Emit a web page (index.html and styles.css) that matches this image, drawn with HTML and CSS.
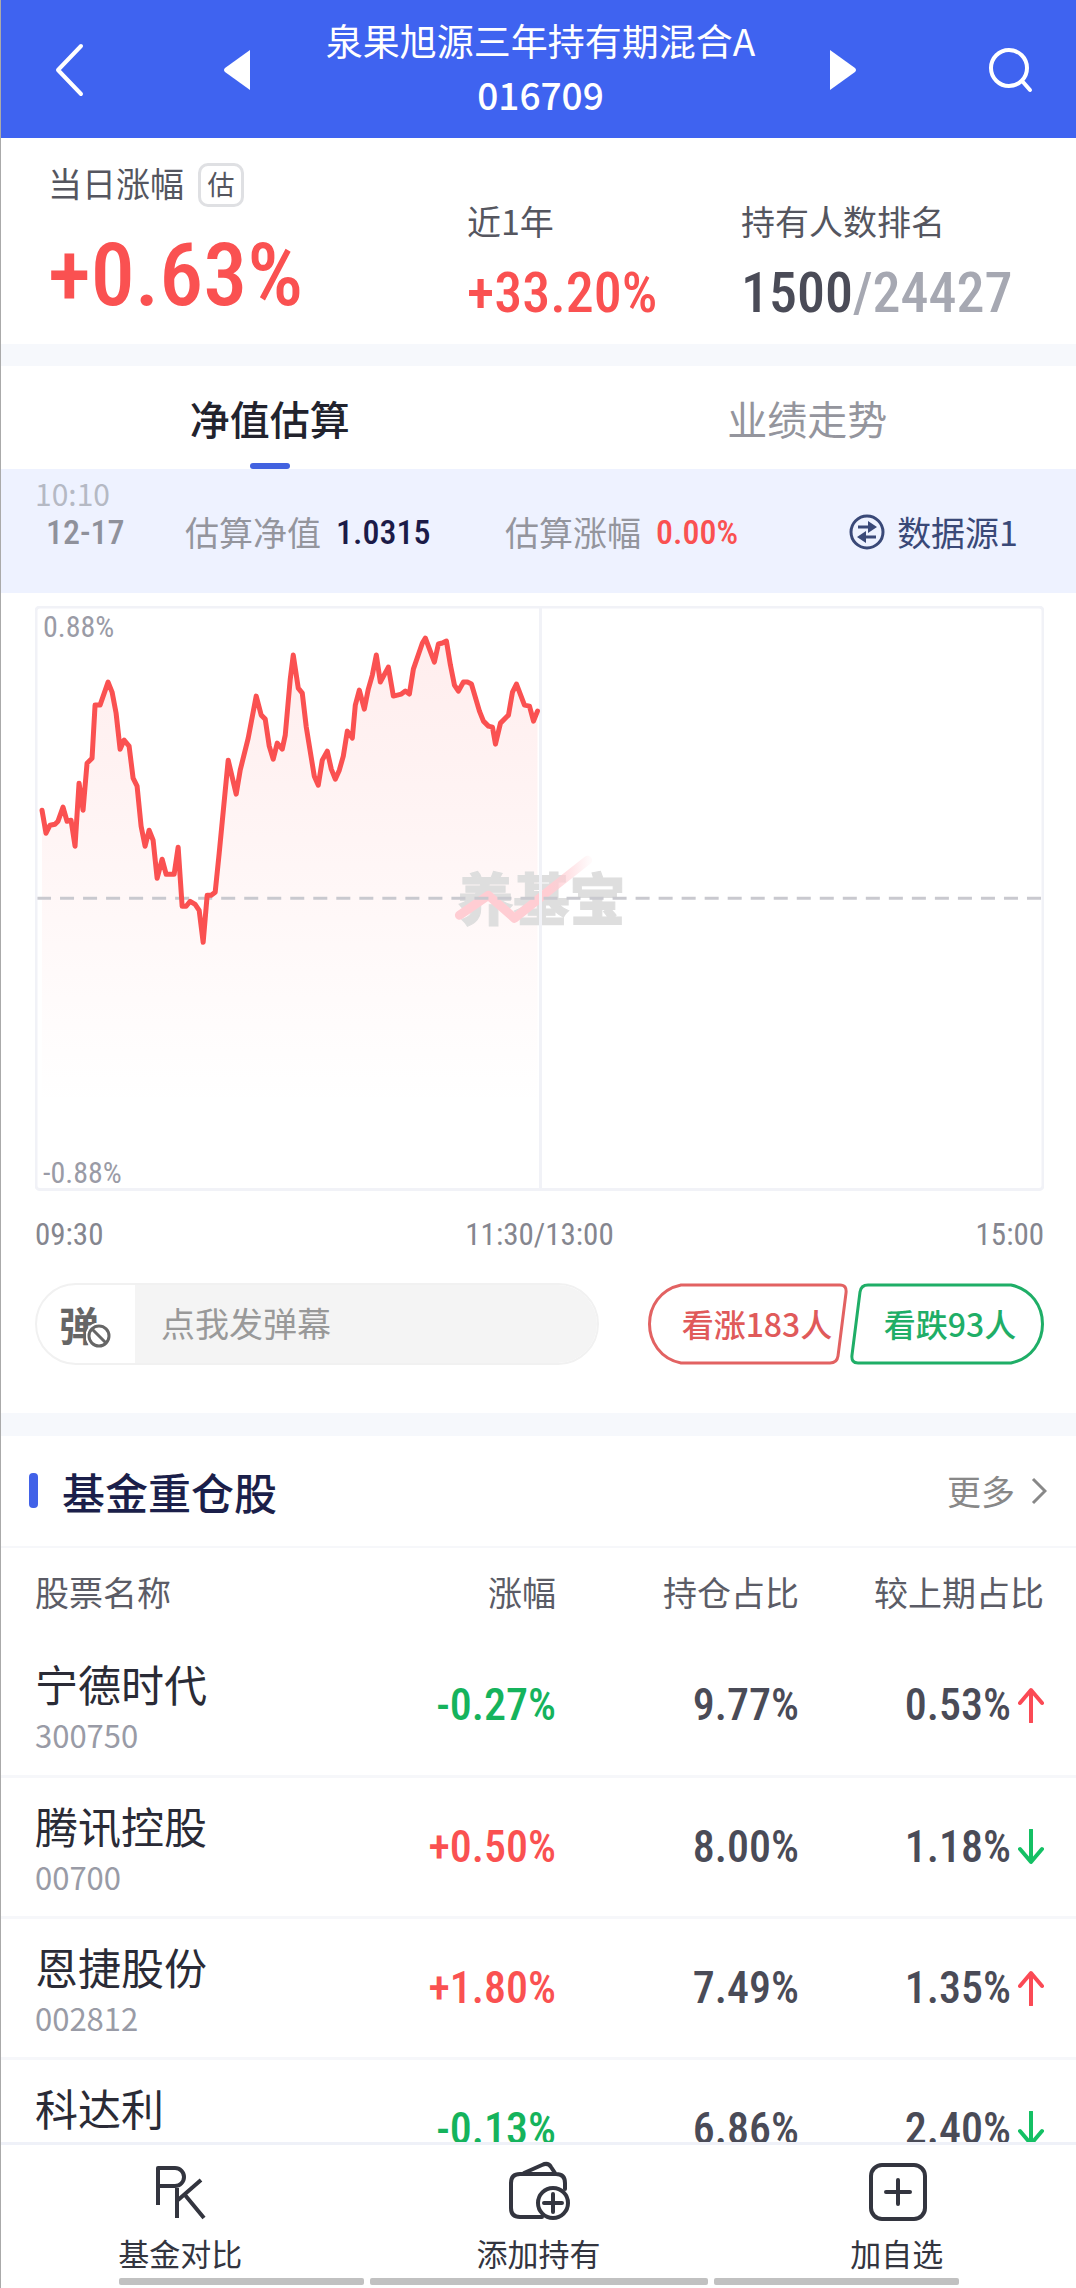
FILE: index.html
```html
<!DOCTYPE html>
<html lang="zh-CN">
<head>
<meta charset="utf-8">
<meta name="viewport" content="width=device-width, initial-scale=1">
<title>泉果旭源三年持有期混合A</title>
<link rel="stylesheet" href="styles.css">
</head>
<body>
<div class="app">
  <header class="topbar">
    <button class="icon-btn" aria-label="返回"><svg width="32" height="56" viewBox="0 0 32 56" fill="none" stroke="#fff" stroke-width="4" stroke-linecap="round" stroke-linejoin="round"><path d="M28 4 5 28l23 24"/></svg></button>
    <button class="icon-btn prev" aria-label="上一只"><svg width="26" height="40" viewBox="0 0 26 40" fill="#fff"><path d="M26 0v40L1 22q-2-2 0-4z"/></svg></button>
    <h1 class="fund-title">泉果旭源三年持有期混合A<span class="fund-code">016709</span></h1>
    <button class="icon-btn next" aria-label="下一只"><svg width="26" height="40" viewBox="0 0 26 40" fill="#fff"><path d="M0 0v40l25-18q2-2 0-4z"/></svg></button>
    <button class="icon-btn" aria-label="搜索"><svg width="46" height="46" viewBox="0 0 46 46" fill="none" stroke="#fff" stroke-width="4" stroke-linecap="round"><circle cx="22" cy="21" r="18"/><path d="m36 35 7 8"/></svg></button>
  </header>

  <main class="content">
    <section class="summary">
      <div class="stat stat-main">
        <div class="label">当日涨幅 <span class="badge">估</span></div>
        <div class="num num-xl up">+0.63%</div>
      </div>
      <div class="stat">
        <div class="label">近1年</div>
        <div class="num num-lg up">+33.20%</div>
      </div>
      <div class="stat">
        <div class="label">持有人数排名</div>
        <div class="num num-lg"><span class="rank">1500</span><span class="total">/24427</span></div>
      </div>
    </section>

    <nav class="tabs">
      <button class="tab active">净值估算</button>
      <button class="tab">业绩走势</button>
    </nav>

    <section class="info">
      <div class="clock">10:10</div>
      <div class="info-row">
        <span class="num date">12-17</span>
        <span class="pair">估算净值 <b class="num">1.0315</b></span>
        <span class="pair">估算涨幅 <b class="num up">0.00%</b></span>
        <button class="source"><svg width="36" height="36" viewBox="0 0 36 36" fill="none" stroke="#3a4978" stroke-width="3"><circle cx="18" cy="18" r="16"/><path d="M9 13h12M27 23H15"/><path d="m19 7 9 6-9 6zM17 29l-9-6 9-6z" fill="#3a4978" stroke="none"/></svg>数据源1</button>
      </div>
    </section>

    <section class="chart-box">
      <div class="chart">
        <svg viewBox="0 0 1008 584" role="img" aria-label="净值估算走势">
          <defs>
            <linearGradient id="area" x1="0" y1="0" x2="0" y2="1"><stop offset="0" stop-color="#ff5050" stop-opacity=".1"/><stop offset=".85" stop-color="#ff5050" stop-opacity="0"/></linearGradient>
            <linearGradient id="tick" gradientUnits="userSpaceOnUse" x1="422" y1="0" x2="554" y2="0"><stop offset=".7" stop-color="#ffcdd3"/><stop offset="1" stop-color="#ffcdd3" stop-opacity=".1"/></linearGradient>
          </defs>
          <path fill="url(#area)" d="M7 204 11 227 15 219 20 218 23 215 28 201 32 215 36 214 40 240 44 177 48 204 52 157 57 152 60 99 65 99 73 76 77 86 81 107 85 143 89 134 94 140 98 172 102 180 106 220 110 240 114 224 118 234 122 272 127 253 131 268 139 268 143 241 147 300 151 300 155 295 160 298 164 304 168 336 172 289 176 289 180 286 184 247 193 154 201 188 205 164 213 132 221 90 226 109 230 113 234 140 238 153 242 137 247 143 250 129 255 73 258 49 263 82 267 87 271 121 279 170 283 179 287 154 292 145 296 163 300 173 304 164 308 150 312 125 317 132 320 99 324 84 329 103 333 83 337 69 341 49 345 76 353 61 358 90 366 88 370 85 374 88 378 63 387 37 390 32 399 56 403 38 407 37 411 35 415 59 419 79 423 85 428 76 432 76 436 78 444 105 448 115 453 120 457 121 460 138 465 117 473 109 477 86 481 78 489 99 494 100 498 115 502 105V582H7z"/>
          <text class="watermark" x="506" y="314" text-anchor="middle">养基宝</text>
          <path d="M424 309 453 289 479 312 514 284 552 254" fill="none" stroke="url(#tick)" stroke-width="9" stroke-linecap="round" stroke-linejoin="round"/>
          <path d="M505 1V583" stroke="#f1f2f7" stroke-width="3"/>
          <path d="M2 292H1006" stroke="#c9c9cf" stroke-width="3" stroke-dasharray="14 9"/>
          <rect x="1" y="1" width="1006" height="582" rx="4" fill="none" stroke="#f1f2f7" stroke-width="3"/>
          <path fill="none" stroke="#fa5151" stroke-width="5" stroke-linejoin="round" stroke-linecap="round" d="M7 204 11 227 15 219 20 218 23 215 28 201 32 215 36 214 40 240 44 177 48 204 52 157 57 152 60 99 65 99 73 76 77 86 81 107 85 143 89 134 94 140 98 172 102 180 106 220 110 240 114 224 118 234 122 272 127 253 131 268 139 268 143 241 147 300 151 300 155 295 160 298 164 304 168 336 172 289 176 289 180 286 184 247 193 154 201 188 205 164 213 132 221 90 226 109 230 113 234 140 238 153 242 137 247 143 250 129 255 73 258 49 263 82 267 87 271 121 279 170 283 179 287 154 292 145 296 163 300 173 304 164 308 150 312 125 317 132 320 99 324 84 329 103 333 83 337 69 341 49 345 76 353 61 358 90 366 88 370 85 374 88 378 63 387 37 390 32 399 56 403 38 407 37 411 35 415 59 419 79 423 85 428 76 432 76 436 78 444 105 448 115 453 120 457 121 460 138 465 117 473 109 477 86 481 78 489 99 494 100 498 115 502 105"/>
        </svg>
        <span class="num bound bound-top">0.88%</span>
        <span class="num bound bound-bottom">-0.88%</span>
      </div>
      <div class="num axis"><span>09:30</span><span>11:30/13:00</span><span>15:00</span></div>
    </section>

    <section class="vote">
      <div class="danmu">
        <button class="danmu-toggle" aria-label="关闭弹幕"><span>弹</span><svg class="ban" width="26" height="26" viewBox="0 0 26 26" fill="#fff" stroke="#666" stroke-width="3"><circle cx="13" cy="13" r="12" stroke="#fff"/><circle cx="13" cy="13" r="10"/><path d="m6 6 14 14"/></svg></button>
        <input class="danmu-input" type="text" placeholder="点我发弹幕" aria-label="发弹幕">
      </div>
      <div class="vote-btns">
        <button class="vote-btn vote-up"><svg viewBox="0 0 200 82" fill="#fff" stroke="#e26262" stroke-width="3"><path d="M33 2H192Q199 2 198 10L190 73Q189 80 182 80H33C-9 71-9 11 33 2z"/></svg><span>看涨183人</span></button>
        <button class="vote-btn vote-down"><svg viewBox="0 0 194 82" fill="#fff" stroke="#1fae67" stroke-width="3"><path d="M161 2H18Q11 2 10 9L2 72Q1 80 8 80H161C203 71 203 11 161 2z"/></svg><span>看跌93人</span></button>
      </div>
    </section>

    <section class="holdings">
      <div class="section-head">
        <h2>基金重仓股</h2>
        <a class="more" href="#">更多<svg width="16" height="28" viewBox="0 0 16 28" fill="none" stroke="#888" stroke-width="3"><path d="m2 2 12 12L2 26"/></svg></a>
      </div>
      <table>
        <thead><tr><th>股票名称</th><th>涨幅</th><th>持仓占比</th><th>较上期占比</th></tr></thead>
        <tbody>
          <tr><td><div class="name">宁德时代</div><div class="code">300750</div></td><td class="num down">-0.27%</td><td class="num">9.77%</td><td class="num">0.53%<svg class="arrow" viewBox="0 0 26 36" stroke="#fb4a55"><path d="M13 35V4M2 16 13 3l11 13"/></svg></td></tr>
          <tr><td><div class="name">腾讯控股</div><div class="code">00700</div></td><td class="num up">+0.50%</td><td class="num">8.00%</td><td class="num">1.18%<svg class="arrow" viewBox="0 0 26 36" stroke="#14c064"><path d="M13 1v31M2 20l11 13 11-13"/></svg></td></tr>
          <tr><td><div class="name">恩捷股份</div><div class="code">002812</div></td><td class="num up">+1.80%</td><td class="num">7.49%</td><td class="num">1.35%<svg class="arrow" viewBox="0 0 26 36" stroke="#fb4a55"><path d="M13 35V4M2 16 13 3l11 13"/></svg></td></tr>
          <tr><td><div class="name">科达利</div><div class="code"></div></td><td class="num down">-0.13%</td><td class="num">6.86%</td><td class="num">2.40%<svg class="arrow" viewBox="0 0 26 36" stroke="#14c064"><path d="M13 1v31M2 20l11 13 11-13"/></svg></td></tr>
        </tbody>
      </table>
    </section>
  </main>

  <footer class="actions">
    <button class="action"><svg width="60" height="60" viewBox="0 0 60 60" fill="none" stroke="#33353f" stroke-width="4" stroke-linejoin="round"><path d="M8 44V7h17a9 9 0 0 1 0 18H8M27 27v30M51 19 28 39M35 34l19 23"/></svg>基金对比</button>
    <button class="action"><svg width="64" height="60" viewBox="0 0 64 60" fill="none" stroke="#33353f" stroke-width="4" stroke-linecap="round" stroke-linejoin="round"><path d="M36 56H14q-9 0-9-9V22q0-9 9-9h36q9 0 9 9v6M18 12 36 4q6-3 9 2l4 6"/><circle cx="47" cy="42" r="15"/><path d="M47 33v18M38 42h18"/></svg>添加持有</button>
    <button class="action"><svg width="60" height="60" viewBox="0 0 60 60" fill="none" stroke="#33353f" stroke-width="4" stroke-linecap="round"><rect x="4" y="4" width="54" height="54" rx="11"/><path d="M31 19v24M19 31h24"/></svg>加自选</button>
    <div class="indicator"><i></i><i></i><i></i></div>
  </footer>
</div>
</body>
</html>
```

FILE: styles.css
```css
:root {
  --red: #fa5151;
  --green: #15b35c;
  --line: #f6f7fa;
  --band: #f6f8fc;
  --cjk: "Noto Sans CJK SC", sans-serif;
  --din: "Roboto Condensed", "Liberation Sans Narrow", Roboto, sans-serif;
}
* { box-sizing: border-box; }
body { margin: 0; font: 34px/48px var(--cjk); color: #4a4b57; background: #fff; }
button { border: 0; padding: 0; background: none; font: inherit; color: inherit; cursor: pointer; }
svg { display: block; flex: none; }
.num { font-family: var(--din); }
.up { color: var(--red); }
.down { color: var(--green); }

.app { display: flex; flex-direction: column; height: 100vh; border-left: 1px solid #aaa; }
.content { flex: 1; min-height: 0; overflow-y: auto; scrollbar-width: none; }

.topbar { display: grid; grid-template-columns: 136px 170px 1fr 170px 132px; align-items: center; height: 138px; background: #3f63f0; }
.icon-btn { display: flex; justify-content: center; padding-top: 2px; }
.prev { padding-left: 30px; }
.next { padding-right: 32px; }
.fund-title { margin: 0; padding-bottom: 4px; text-align: center; white-space: nowrap; font-size: 37px; line-height: 54px; font-weight: 400; color: #fff; }
.fund-code { display: block; font-weight: 500; }

.summary { display: grid; grid-template-columns: 419px 274px 1fr; align-items: end; height: 206px; padding: 12px 0 15px 47px; }
.label { display: flex; align-items: center; gap: 14px; color: #55565f; }
.badge { width: 46px; height: 44px; margin-top: 4px; border: 3px solid #dfe0e3; border-radius: 10px; font-size: 27px; line-height: 36px; text-align: center; }
.num-xl { font-size: 88px; line-height: 108px; font-weight: 500; }
.num-lg { margin-top: 12px; font-size: 56px; line-height: 72px; font-weight: 500; }
.stat-main .num { margin-top: 14px; }
.rank { font-weight: 500; }
.total { color: #a6a8b2; }

.tabs { display: grid; grid-template-columns: 1fr 1fr; height: 125px; border-top: 22px solid var(--band); }
.tab { position: relative; font-size: 40px; color: #94959d; }
.tab.active { color: #22232d; font-weight: 500; }
.tab.active::after { content: ""; position: absolute; left: 50%; bottom: 0; width: 40px; height: 6px; margin-left: -20px; border-radius: 3px; background: #4262e0; }

.info { height: 124px; padding: 4px 58px 0 34px; background: #eef2ff; }
.clock { font-size: 30px; line-height: 40px; color: #b5b9c4; }
.info-row { display: grid; grid-template-columns: 139px 320px 1fr auto; align-items: center; padding-left: 11px; line-height: 38px; }
.info-row .num { font-size: 34px; font-weight: 500; }
.date { color: #8f919b; }
.pair { display: flex; gap: 15px; color: #94959d; }
.pair b { color: #1b1b48; }
.pair b.up { color: var(--red); }
.source { display: flex; align-items: center; gap: 12px; color: #3a4978; }

.chart-box { padding: 13px 32px 0 34px; }
.chart { position: relative; }
.chart svg { width: 100%; height: auto; }
.watermark { font: 900 56px var(--cjk); fill: #dedede; stroke: #dedede; stroke-width: 1px; }
.bound { position: absolute; left: 8px; font-size: 30px; line-height: 36px; color: #9a9ba6; }
.bound-top { top: 3px; }
.bound-bottom { bottom: 0; }
.axis { display: flex; justify-content: space-between; margin-top: 26px; font-size: 31px; line-height: 36px; color: #85868f; }

.vote { display: flex; justify-content: space-between; height: 160px; padding: 30px 32px 0 34px; }
.danmu { display: flex; width: 564px; height: 82px; border: 2px solid #f1f1f1; border-radius: 41px; overflow: hidden; }
.danmu-toggle { position: relative; width: 98px; font-size: 40px; font-weight: 700; color: #666; }
.danmu-toggle span { display: block; padding-right: 14px; }
.ban { position: absolute; left: 49px; top: 38px; }
.danmu-input { flex: 1; min-width: 0; padding: 0 26px 2px; border: 0; background: #f4f4f4; font: inherit; }
.danmu-input::placeholder { color: #999; opacity: 1; }
.vote-btns { display: flex; gap: 2px; }
.vote-btn { position: relative; width: 200px; height: 82px; padding-bottom: 2px; font-size: 32px; font-weight: 500; }
.vote-btn svg { position: absolute; inset: 0; }
.vote-btn span { position: relative; }
.vote-up { padding-left: 18px; color: #e05a5a; }
.vote-down { width: 194px; padding-left: 6px; color: #1fae67; }

.holdings { border-top: 23px solid var(--band); }
.section-head { display: flex; align-items: center; justify-content: space-between; height: 112px; padding: 0 29px 0 28px; border-bottom: 2px solid var(--line); }
.section-head h2 { display: flex; align-items: center; gap: 24px; margin: 0; font-size: 43px; font-weight: 500; color: #1b1f4a; }
.section-head h2::before { content: ""; width: 9px; height: 35px; border-radius: 4px; background: #4262e8; }
.more { display: flex; align-items: center; gap: 16px; color: #888; text-decoration: none; }

table { width: 100%; border-collapse: collapse; table-layout: fixed; }
th, td { padding: 0; text-align: right; }
th { height: 88px; font-weight: 400; color: #5b5c66; }
th:first-child, td:first-child { width: 310px; padding-left: 34px; text-align: left; }
th:nth-child(3), td:nth-child(3) { width: 243px; }
th:last-child, td:last-child { width: 277px; padding-right: 32px; }
td { height: 141px; border-bottom: 3px solid var(--line); vertical-align: middle; white-space: nowrap; }
td.num { font-size: 44px; font-weight: 500; }
.name { padding-top: 2px; font-size: 43px; line-height: 58px; color: #2a2b36; }
.code { height: 46px; font-size: 31px; line-height: 46px; color: #999ba6; }
.arrow { display: inline-block; width: 26px; height: 36px; margin-left: 7px; vertical-align: -3px; fill: none; stroke-width: 4; stroke-linecap: round; stroke-linejoin: round; }

.actions { display: grid; grid-template-columns: 1fr 1fr 1fr; height: 146px; padding-top: 16px; border-top: 3px solid #eff1f8; background: #fff; }
.action { display: flex; flex-direction: column; align-items: center; gap: 10px; font-size: 31px; line-height: 44px; color: #33353f; }
.indicator { grid-column: 1 / -1; display: flex; gap: 6px; width: 840px; max-width: 80%; margin: 0 auto; }
.indicator i { flex: 245; height: 7px; border-radius: 2px; background: #c1c1c1; }
.indicator i:nth-child(2) { flex: 338; }
```
